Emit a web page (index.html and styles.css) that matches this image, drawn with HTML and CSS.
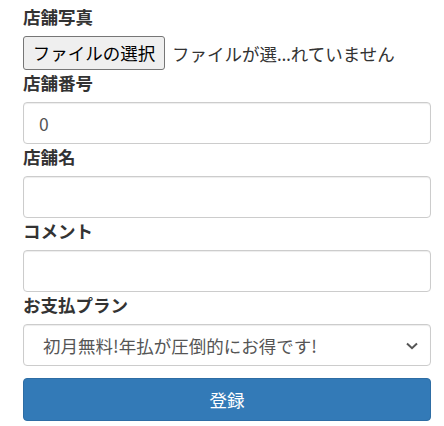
FILE: index.html
```html
<!DOCTYPE html>
<html lang="ja">
<head>
<meta charset="utf-8">
<title>店舗登録</title>
<link rel="stylesheet" href="styles.css">
</head>
<body>
<form class="form">
  <label class="label">店舗写真</label>
  <div class="file-row">
    <button type="button" class="file-btn">ファイルの選択</button>
    <span class="file-name">ファイルが選<span class="ellipsis">…</span>れていません</span>
  </div>
  <label class="label">店舗番号</label>
  <input class="control" type="text" value="0">
  <label class="label">店舗名</label>
  <input class="control" type="text">
  <label class="label">コメント</label>
  <input class="control" type="text">
  <label class="label">お支払プラン</label>
  <div class="select-wrap">
    <select class="control select">
      <option>初月無料!年払が圧倒的にお得です!</option>
    </select>
    <svg class="chevron" width="12" height="8" viewBox="0 0 12 8"><path d="M1 1.5 L6 6.2 L11 1.5" fill="none" stroke="#555" stroke-width="2"/></svg>
  </div>
  <button type="button" class="submit">登録</button>
</form>
</body>
</html>
```
FILE: styles.css
```css
* { box-sizing: border-box; }
html, body { margin: 0; background: #fff; }
body {
  font-family: "Noto Sans CJK JP", "Noto Sans", sans-serif;
  font-size: 17.5px;
  color: #333;
}
.form {
  display: flex;
  flex-direction: column;
  padding: 5px 13px 0 23px;
}
.label {
  display: block;
  height: 24px;
  line-height: 24px;
  font-weight: bold;
  margin-bottom: 7px;
}
.file-row {
  display: flex;
  align-items: center;
  height: 34px;
  margin-bottom: 1px;
}
.file-btn {
  height: 34px;
  width: 142px;
  padding: 0;
  background: #efefef;
  border: 1px solid #767676;
  border-radius: 3px;
  font: inherit;
  color: #000;
  line-height: 32px;
}
.file-name {
  margin-left: 7px;
  color: #333;
  white-space: nowrap;
}
.ellipsis {
  font-family: "Noto Sans", sans-serif;
}
.control {
  display: block;
  width: 100%;
  height: 42px;
  margin: 0 0 1px 0;
  padding: 0 15px;
  border: 1px solid #ccc;
  border-radius: 4px;
  background: #fff;
  font: inherit;
  color: #555;
  box-shadow: inset 0 1px 1px rgba(0,0,0,.075);
  outline: none;
}
.select-wrap {
  position: relative;
  margin-bottom: 12px;
}
.select {
  appearance: none;
  -webkit-appearance: none;
  padding-left: 19px;
  margin: 0;
}
.chevron {
  position: absolute;
  right: 13px;
  top: 18px;
  pointer-events: none;
}
.submit {
  height: 43px;
  width: 100%;
  background: #337ab7;
  border: 1px solid #2e6da4;
  border-radius: 4px;
  color: #fff;
  font: inherit;
}
```
